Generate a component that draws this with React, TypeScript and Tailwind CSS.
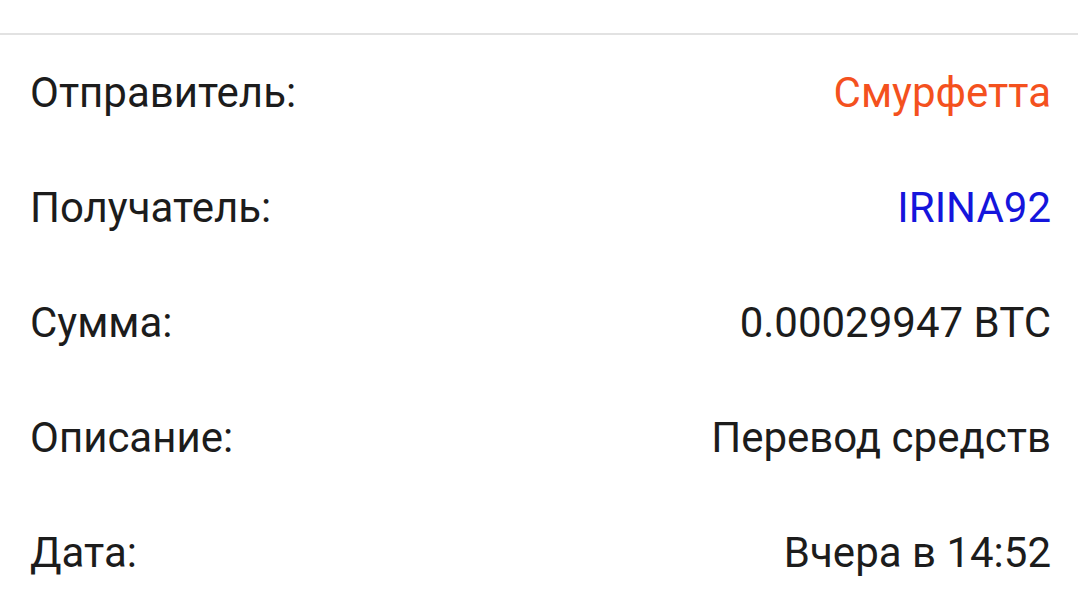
import React from "react";

const rows: { label: string; value: string; color: string }[] = [
  { label: "Отправитель:", value: "Смурфетта", color: "text-[#f4511e]" },
  { label: "Получатель:", value: "IRINA92", color: "text-[#1515dc]" },
  { label: "Сумма:", value: "0.00029947 BTC", color: "text-[#1c1c1c]" },
  { label: "Описание:", value: "Перевод средств", color: "text-[#1c1c1c]" },
  { label: "Дата:", value: "Вчера в 14:52", color: "text-[#1c1c1c]" },
];

export default function App() {
  return (
    <div
      className="w-[1078px] h-[611px] bg-white overflow-hidden"
      style={{ fontFamily: "Roboto, 'Noto Sans', sans-serif" }}
    >
      <div className="h-[33px]" />
      <div className="h-[2px] bg-[#e2e2e2]" />
      <div className="flex flex-col">
        {rows.map((r) => (
          <div
            key={r.label}
            className="h-[115px] flex items-center justify-between pl-[30px] pr-[27px] text-[42px] leading-none"
          >
            <span className="text-[#1c1c1c]">{r.label}</span>
            <span className={r.color}>{r.value}</span>
          </div>
        ))}
      </div>
    </div>
  );
}
